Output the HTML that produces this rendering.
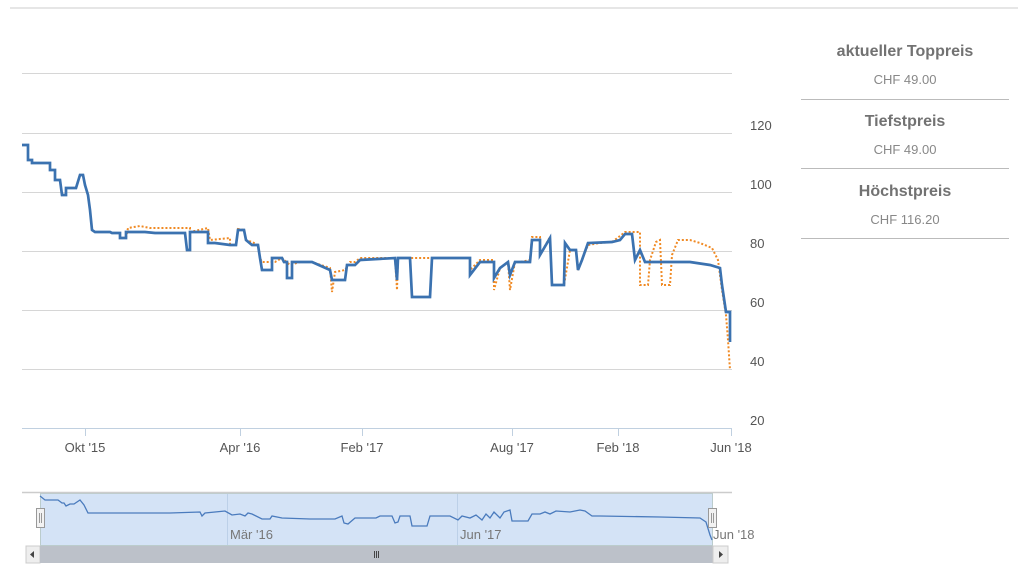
<!DOCTYPE html>
<html><head><meta charset="utf-8"><style>
body{margin:0;width:1024px;height:579px;background:#fff;font-family:"Liberation Sans",sans-serif;overflow:hidden;position:relative}
.top{position:absolute;left:10px;right:6px;top:7px;height:2px;background:#e6e6e6}
.panel{position:absolute;left:801px;width:208px;text-align:center;color:#777}
.t{font-weight:bold;font-size:16px;color:#727272}
.v{font-size:13px;color:#888;margin-top:11px}
.sep{position:absolute;left:801px;width:208px;height:1px;background:#bbb}
</style></head><body>
<div class="top"></div>
<div class="panel" style="top:43px"><div class="t">aktueller Toppreis</div><div class="v">CHF 49.00</div></div>
<div class="sep" style="top:99px"></div>
<div class="panel" style="top:113px"><div class="t">Tiefstpreis</div><div class="v">CHF 49.00</div></div>
<div class="sep" style="top:168px"></div>
<div class="panel" style="top:183px"><div class="t">Höchstpreis</div><div class="v">CHF 116.20</div></div>
<div class="sep" style="top:238px"></div>
<svg width="1024" height="579" style="position:absolute;left:0;top:0" font-family="Liberation Sans, sans-serif">
<g stroke="#d6d6d6" stroke-width="1">
<line x1="22" y1="73.5" x2="732" y2="73.5"/><line x1="22" y1="133.5" x2="732" y2="133.5"/>
<line x1="22" y1="192.5" x2="732" y2="192.5"/><line x1="22" y1="251.5" x2="732" y2="251.5"/>
<line x1="22" y1="310.5" x2="732" y2="310.5"/><line x1="22" y1="369.5" x2="732" y2="369.5"/>
</g>
<line x1="22" y1="428.5" x2="732" y2="428.5" stroke="#c0d0e0"/>
<g stroke="#c0d0e0"><line x1="85.5" y1="428" x2="85.5" y2="436"/><line x1="240.5" y1="428" x2="240.5" y2="436"/><line x1="362.5" y1="428" x2="362.5" y2="436"/><line x1="512.5" y1="428" x2="512.5" y2="436"/><line x1="618.5" y1="428" x2="618.5" y2="436"/><line x1="731.5" y1="428" x2="731.5" y2="436"/></g>
<g fill="#555" font-size="13">
<text x="750" y="130">120</text><text x="750" y="189">100</text><text x="750" y="248">80</text><text x="750" y="307">60</text><text x="750" y="366">40</text><text x="750" y="425">20</text>
<text x="85" y="452" text-anchor="middle">Okt '15</text><text x="240" y="452" text-anchor="middle">Apr '16</text><text x="362" y="452" text-anchor="middle">Feb '17</text><text x="512" y="452" text-anchor="middle">Aug '17</text><text x="618" y="452" text-anchor="middle">Feb '18</text><text x="731" y="452" text-anchor="middle">Jun '18</text>
</g>
<polyline fill="none" stroke="#f08a24" stroke-width="2" stroke-dasharray="2,2" points="126,238 128,228 140,226 150,228 190,228 190,232 208,228 210,240 230,238 230,245 236,245 238,229 244,230 246,240 252,242 258,245 260,258 262,262 275,262 282,258 290,265 300,262 312,262 330,268 332,292 335,272 345,270 350,262 355,262 360,258 395,258 397,290 398,258 430,258 470,258 470,270 480,260 494,260 494,290 500,268 508,262 510,290 515,262 520,262 530,260 532,237 540,237 540,255 550,237 552,285 564,285 570,250 576,250 578,270 582,260 588,245 600,243 612,242 620,236 625,232 640,232 640,285 648,285 650,260 656,242 660,240 662,285 670,285 672,255 678,240 690,240 700,243 712,248 718,260 722,290 726,315 728,340 730,370"/>
<polyline fill="none" stroke="#3b72b0" stroke-width="2.7" points="22,145 28,145 28,160 32,160 32,163 50,163 50,170 55,170 55,180 60,180 62,195 66,195 66,188 76,188 80,175 83,175 85,185 88,195 90,210 92,230 95,232 110,232 112,233 120,233 120,238 126,238 126,232 145,232 155,233 185,233 187,250 190,250 190,232 208,232 208,243 215,243 230,245 236,245 238,230 244,230 246,240 252,245 258,245 260,258 262,270 272,270 272,258 282,258 284,262 287,262 287,278 292,278 292,262 312,262 330,270 332,280 345,280 347,265 355,265 360,260 395,258 397,280 398,258 410,258 412,297 430,297 432,258 470,258 470,275 480,262 494,262 494,278 500,268 508,262 510,275 515,262 530,262 532,240 540,240 540,255 550,238 552,285 564,285 565,243 570,250 576,250 578,270 582,260 588,243 612,242 620,240 625,234 632,234 635,260 640,250 645,262 660,262 690,262 710,265 720,268 722,285 726,312 730,312 730,342"/>
<rect x="40.5" y="493.5" width="672" height="52" fill="#d4e3f6" stroke="#bcc"/>
<line x1="22" y1="492.5" x2="732" y2="492.5" stroke="#ccc" stroke-width="1.5"/>
<g stroke="#bcd0e8"><line x1="227.5" y1="494" x2="227.5" y2="545"/><line x1="457.5" y1="494" x2="457.5" y2="545"/></g>
<polyline fill="none" stroke="#4a7bbd" stroke-width="1.3" points="40,496 45,500 58,500 62,503 64,503 66,506 70,504 74,504 80,500 84,505 88,513 140,513 170,513 200,512 202,516 205,513 225,511 232,515 240,514 245,516 248,513 252,514 262,519 270,519 272,516 282,518 310,519 335,519 342,516 344,523 348,524 355,518 372,518 376,518 380,516 392,516 395,523 398,522 400,516 410,516 412,526 427,526 430,516 450,516 458,520 462,516 470,518 476,515 482,520 486,514 490,518 494,512 500,518 504,512 510,510 512,521 528,521 532,514 540,514 545,512 550,514 556,511 570,512 580,510 585,511 592,516 600,516 660,517 700,518 706,522 710,535 712,540"/>
<rect x="36.5" y="508.5" width="8" height="19" fill="#f2f2f2" stroke="#999"/>
<line x1="39.5" y1="513" x2="39.5" y2="523" stroke="#999"/><line x1="41.5" y1="513" x2="41.5" y2="523" stroke="#999"/>
<rect x="708.5" y="508.5" width="8" height="19" fill="#f2f2f2" stroke="#999"/>
<line x1="711.5" y1="513" x2="711.5" y2="523" stroke="#999"/><line x1="713.5" y1="513" x2="713.5" y2="523" stroke="#999"/>
<g fill="#777" font-size="13"><text x="230" y="539">Mär '16</text><text x="460" y="539">Jun '17</text><text x="713" y="539">Jun '18</text></g>
<rect x="26" y="546" width="14" height="17" fill="#eee" stroke="#ccc"/>
<rect x="40" y="546" width="673" height="17" fill="#bcc1c9"/>
<rect x="713" y="546" width="15" height="17" fill="#eee" stroke="#ccc"/>
<polygon points="34,551 30,554.5 34,558" fill="#444"/>
<polygon points="719,551 723,554.5 719,558" fill="#444"/>
<g stroke="#444"><line x1="374.5" y1="551" x2="374.5" y2="558"/><line x1="376.5" y1="551" x2="376.5" y2="558"/><line x1="378.5" y1="551" x2="378.5" y2="558"/></g>
</svg>
</body></html>
